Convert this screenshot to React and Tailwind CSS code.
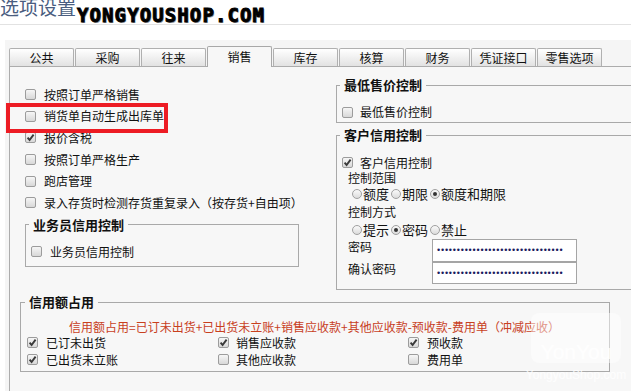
import React from "react";

const leftItems = [
  { label: "按照订单严格销售", checked: false },
  { label: "销货单自动生成出库单", checked: false },
  { label: "报价含税", checked: true },
  { label: "按照订单严格生产", checked: false },
  { label: "跑店管理", checked: false },
  { label: "录入存货时检测存货重复录入（按存货+自由项）", checked: false },
];

const tabs = ["公共", "采购", "往来", "销售", "库存", "核算", "财务", "凭证接口", "零售选项"];

function Box({ checked }) {
  return (
    <span className="flex h-[11px] w-[11px] shrink-0 items-center justify-center rounded-[2px] border border-[#9c9c9c] bg-linear-to-b from-[#f6f6f6] to-[#d8d8d8]">
      {checked && (
        <svg width="9" height="9" viewBox="0 0 9 9">
          <path d="M1.6 4.6 L3.6 7 L7.6 1.6" fill="none" stroke="#3a3a3a" strokeWidth="1.9" />
        </svg>
      )}
    </span>
  );
}

function Radio({ on, label }) {
  return (
    <span className="mr-[2px] flex items-center gap-[1px]">
      <span className="flex h-[10px] w-[10px] items-center justify-center rounded-full border border-[#a0a0a0] bg-linear-to-b from-[#fafafa] to-[#dcdcdc]">
        {on && <span className="h-[4px] w-[4px] rounded-full bg-[#333]" />}
      </span>
      <span className="text-[13px]">{label}</span>
    </span>
  );
}

function Legend({ children, className }) {
  return (
    <legend className={"px-[4px] text-[13px] font-bold leading-[16px] text-[#111] " + className}>
      {children}
    </legend>
  );
}

const dots = "••••••••••••••••••••••••••••••••";

export default function App() {
  return (
    <div className="relative flex h-[391px] w-[631px] flex-col overflow-hidden bg-white font-['Noto_Sans_CJK_SC','Noto_Sans',sans-serif] text-[12px] text-[#111]">
      {/* header */}
      <div className="flex h-[25px] shrink-0 items-start border-b border-[#e2e2e2]">
        <div className="mt-[-3px] w-[77px] text-[19px] leading-[20px] text-[#4a5d80]">选项设置</div>
        <div className="mt-[6px] font-['DejaVu_Sans_Mono',monospace] text-[19px] font-black leading-[19px] tracking-[1.1px] text-black [-webkit-text-stroke:0.9px_#000] [text-shadow:1px_1px_0_#9a9a9a]">
          YONGYOUSHOP.COM
        </div>
      </div>

      <div className="ml-[5px] mt-[15px] flex flex-1 flex-col bg-[#f5f5f5] pl-[4px]">
        {/* tabs */}
        <div className="flex h-[26px] shrink-0 items-end gap-[1px]">
          {tabs.map((t) =>
            t === "销售" ? (
              <div
                key={t}
                className="relative z-10 mb-[-1px] flex h-[21px] w-[65px] items-center justify-center rounded-t-[2px] border border-b-0 border-[#a8a8a8] bg-[#f7f7f7]"
              >
                {t}
              </div>
            ) : (
              <div
                key={t}
                className="flex h-[18px] w-[65px] items-center justify-center rounded-t-[2px] border border-b-0 border-[#b0b0b0] bg-linear-to-b from-[#ffffff] to-[#e2e2e2]"
              >
                {t}
              </div>
            )
          )}
        </div>

        {/* panel */}
        <div className="flex-1 border-l border-t border-[#acacac] bg-[#f7f7f7]">
          <div className="flex items-start">
            {/* left column */}
            <div className="w-[326px] shrink-0 pt-[17px]">
              {leftItems.map((it) => (
                <div key={it.label} className="flex h-[21.6px] items-center gap-[8px] pl-[15px]">
                  <Box checked={it.checked} />
                  <span>{it.label}</span>
                </div>
              ))}
              <fieldset className="ml-[15px] mt-[3.4px] w-[274px] border border-[#a9a9a9] pb-[4px]">
                <Legend className="ml-[3px]">业务员信用控制</Legend>
                <div className="mt-[9px] flex h-[20px] items-center gap-[8px] pl-[5px]">
                  <Box />
                  <span>业务员信用控制</span>
                </div>
              </fieldset>
            </div>

            {/* right column */}
            <div className="w-[310px] shrink-0">
              <fieldset className="mt-[10px] border border-[#a9a9a9] pb-[0px]">
                <Legend className="ml-[3px]">最低售价控制</Legend>
                <div className="mt-[9px] flex h-[20px] items-center gap-[7px] pl-[5px]">
                  <Box />
                  <span>最低售价控制</span>
                </div>
              </fieldset>

              <fieldset className="mt-[4px] border border-[#a9a9a9] pb-[5px]">
                <Legend className="ml-[3px]">客户信用控制</Legend>
                <div className="mt-[12px] flex h-[15px] items-center gap-[7px] pl-[5px]">
                  <Box checked />
                  <span>客户信用控制</span>
                </div>
                <div className="flex h-[15px] items-center pl-[11px]">控制范围</div>
                <div className="flex h-[18px] items-center pl-[15px]">
                  <Radio label="额度" />
                  <Radio label="期限" />
                  <Radio on label="额度和期限" />
                </div>
                <div className="flex h-[17px] items-center pl-[11px]">控制方式</div>
                <div className="flex h-[19px] items-center pl-[15px]">
                  <Radio label="提示" />
                  <Radio on label="密码" />
                  <Radio label="禁止" />
                </div>
                <div className="flex h-[23px] items-start pl-[11px]">
                  <span className="w-[84px] leading-[16px]">密码</span>
                  <div className="flex h-[23px] w-[145px] items-center border border-[#a5a5a5] bg-white pl-[4px]">
                    <span className="font-['Liberation_Sans',sans-serif] text-[9px] leading-[9px] tracking-[0.8px] text-[#1c1c60]">{dots}</span>
                  </div>
                </div>
                <div className="flex h-[22px] items-start pl-[11px]">
                  <span className="w-[84px] leading-[14px]">确认密码</span>
                  <div className="flex h-[22px] w-[145px] items-center border border-[#a5a5a5] bg-white pl-[4px]">
                    <span className="font-['Liberation_Sans',sans-serif] text-[9px] leading-[9px] tracking-[0.8px] text-[#1c1c60]">{dots}</span>
                  </div>
                </div>
              </fieldset>
            </div>
          </div>

          {/* credit usage */}
          <fieldset className="ml-[10px] mt-[4px] w-[590px] border border-[#a9a9a9] pb-[3px]">
            <Legend className="ml-[4px]">信用额占用</Legend>
            <div className="mt-[10px] h-[14px] pl-[48px] leading-[14px] text-[#c8401e]">
              信用额占用=已订未出货+已出货未立账+销售应收款+其他应收款-预收款-费用单（冲减应收）
            </div>
            <div className="grid grid-cols-[191px_190px_1fr] pl-[6px]">
              <div className="flex h-[17px] items-center gap-[8px]"><Box checked /><span>已订未出货</span></div>
              <div className="flex h-[17px] items-center gap-[7px]"><Box checked /><span>销售应收款</span></div>
              <div className="flex h-[17px] items-center gap-[8px]"><Box checked /><span>预收款</span></div>
              <div className="flex h-[17px] items-center gap-[8px]"><Box checked /><span>已出货未立账</span></div>
              <div className="flex h-[17px] items-center gap-[7px]"><Box /><span>其他应收款</span></div>
              <div className="flex h-[17px] items-center gap-[8px]"><Box /><span>费用单</span></div>
            </div>
          </fieldset>
        </div>
      </div>

      {/* red highlight */}
      <div className="absolute left-[6px] top-[103px] h-[30px] w-[162px] border-[4px] border-[#ed1c24]" />

      {/* watermark */}
      <div className="absolute left-[524px] top-[313px] flex w-[104px] flex-col items-center">
        <div className="flex h-[50px] w-[90px] items-end justify-center rounded-[8px] bg-white/45 pb-[1px] font-['Liberation_Sans',sans-serif] text-[21px] leading-[21px] text-white/80">
          YonYou
        </div>
        <div className="mt-[6px] font-['Liberation_Sans',sans-serif] text-[12px] leading-[12px] text-white/80">
          YongyouShop.com
        </div>
      </div>
    </div>
  );
}
